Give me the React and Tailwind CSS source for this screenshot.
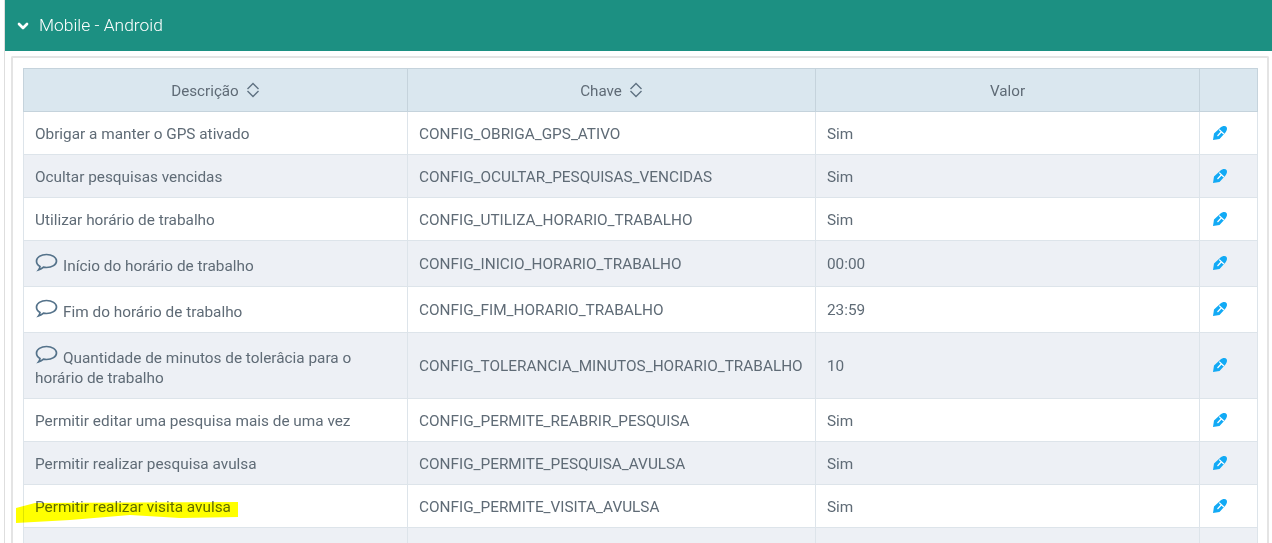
import React from 'react';
import { ChevronDown } from 'lucide-react';

const rows = [
    { desc: 'Obrigar a manter o GPS ativado', key: 'CONFIG_OBRIGA_GPS_ATIVO', val: 'Sim', h: 'h-[43px]' },
    { desc: 'Ocultar pesquisas vencidas', key: 'CONFIG_OCULTAR_PESQUISAS_VENCIDAS', val: 'Sim', h: 'h-[43px]' },
    { desc: 'Utilizar horário de trabalho', key: 'CONFIG_UTILIZA_HORARIO_TRABALHO', val: 'Sim', h: 'h-[43px]' },
    { desc: 'Início do horário de trabalho', key: 'CONFIG_INICIO_HORARIO_TRABALHO', val: '00:00', h: 'h-[46px]', note: true },
    { desc: 'Fim do horário de trabalho', key: 'CONFIG_FIM_HORARIO_TRABALHO', val: '23:59', h: 'h-[46px]', note: true },
    { desc: 'Quantidade de minutos de tolerâcia para o horário de trabalho', key: 'CONFIG_TOLERANCIA_MINUTOS_HORARIO_TRABALHO', val: '10', h: 'h-[66px]', note: true },
    { desc: 'Permitir editar uma pesquisa mais de uma vez', key: 'CONFIG_PERMITE_REABRIR_PESQUISA', val: 'Sim', h: 'h-[43px]' },
    { desc: 'Permitir realizar pesquisa avulsa', key: 'CONFIG_PERMITE_PESQUISA_AVULSA', val: 'Sim', h: 'h-[43px]' },
    { desc: 'Permitir realizar visita avulsa', key: 'CONFIG_PERMITE_VISITA_AVULSA', val: 'Sim', h: 'h-[43px]' },
    { desc: '', key: '', val: '', h: 'h-[43px]', empty: true },
];

function SortIcon() {
    return (
        <svg width="14" height="16" viewBox="0 0 14 16" fill="none" stroke="#5f7282" strokeWidth="1.4" className="inline-block ml-[7px] align-[-2px]">
            <path d="M1.500 7 7 1.500 12.500 7 M1.500 9 7 14.500 12.500 9" />
        </svg>
    );
}

function NoteIcon() {
    return (
        <svg width="23" height="20" viewBox="0 0 23 20" fill="none" stroke="#54728a" strokeWidth="1.7" className="inline-block mr-[5px] align-[-2px]">
            <path d="M11.500 1.500c5.500 0 10 2.900 10 6.500s-4.500 6.500-10 6.500c-1 0-2-.1-3-.3-1.300 1.300-3 2.300-5 2.800.8-1 1.400-2.100 1.500-3.500C2.800 12.300 1.500 10.300 1.500 8c0-3.600 4.500-6.500 10-6.500Z" />
        </svg>
    );
}

function EditIcon() {
    return (
        <svg width="14" height="14" viewBox="0 0 14 14" className="block -mt-[1px]">
            <path d="M0 14 1 7.500 7 2C9.500-.3 12.500-.3 13.500 1c1 1.500.5 4-1.500 6L6.500 13Z" fill="#12aaf5" />
            <path d="M6.200 3.600 10.800 8M8.200 6 4.500 10" stroke="#fff" strokeWidth="1.200" fill="none" />
        </svg>
    );
}

function Row({ row, index }) {
    const bg = index % 2 === 1 ? 'bg-[#edf0f5]' : 'bg-white';
    const cell = 'border border-[#dde4ea] px-[11px] align-middle leading-5';
    const offset = row.note ? 'pt-0' : 'pt-[2px]';
    return (
        <tr className={`${row.h} ${bg}`}>
            <td className={`${cell} pt-[2px]`}>
                {row.note && <NoteIcon />}
                {row.desc}
            </td>
            <td className={`${cell} ${offset}`}>{row.key}</td>
            <td className={`${cell} ${offset}`}>{row.val}</td>
            <td className="border border-[#dde4ea] pl-[13px] align-middle">{!row.empty && <EditIcon />}</td>
        </tr>
    );
}

export default function App() {
    return (
        <div className="relative h-[543px] w-[1272px] overflow-hidden bg-white font-['Roboto',sans-serif] text-[15.35px] text-[#5f6b76]">
            <div className="ml-1 h-full border-l border-[#dedede]">
                <div className="flex h-[51px] items-center gap-[8px] bg-[#1c9082] pl-[10px] text-[17.4px] font-light text-white">
                    <ChevronDown size={16} strokeWidth={4} />
                    <span>Mobile - Android</span>
                </div>
                <div className="mt-[5px] ml-[6px] mr-[3px] h-[600px] rounded-t-[2px] border-2 border-b-0 border-[#e4e4e4] pt-[10px] pl-[10px] pr-[9px]">
                    <table className="w-[1234px] table-fixed border-collapse">
                        <colgroup>
                            <col className="w-[384px]" />
                            <col className="w-[408px]" />
                            <col className="w-[384px]" />
                            <col className="w-[58px]" />
                        </colgroup>
                        <thead>
                            <tr className="h-[43px] bg-[#dae7ef] text-[15.2px]">
                                <th className="border border-[#c5d3dc] pt-[2px] font-normal">Descrição<SortIcon /></th>
                                <th className="border border-[#c5d3dc] pt-[2px] font-normal">Chave<SortIcon /></th>
                                <th className="border border-[#c5d3dc] pt-[2px] font-normal">Valor</th>
                                <th className="border border-[#c5d3dc] font-normal"></th>
                            </tr>
                        </thead>
                        <tbody>
                            {rows.map((row, i) => <Row key={i} row={row} index={i} />)}
                        </tbody>
                    </table>
                </div>
            </div>
            <svg width="225" height="30" viewBox="0 0 225 30" className="absolute left-[15px] top-[497px] mix-blend-multiply">
                <path d="M1 11 20 6 223 5 223 20 165 21 115 18 55 23 1 26Z" fill="#ffff00" />
            </svg>
        </div>
    );
}
